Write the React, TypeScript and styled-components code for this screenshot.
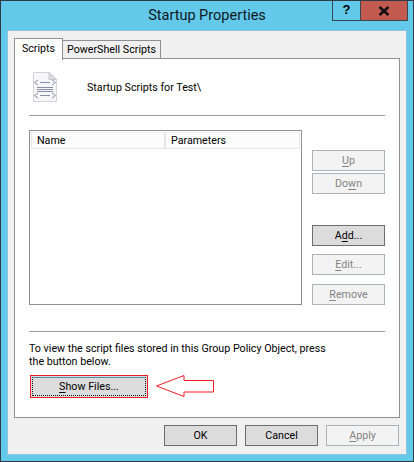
import { createGlobalStyle } from 'styled-components'
import styled from 'styled-components'

const GlobalStyle = createGlobalStyle`
  html, body {
    margin: 0;
    padding: 0;
    background: #63c9ea;
  }
  * {
    box-sizing: border-box;
  }
`

const Window = styled.div`
  width: 414px;
  height: 462px;
  background: #63c9ea;
  border: 1px solid #2f3b44;
  font-family: Roboto, Lato, sans-serif;
  font-size: 10.7px;
  color: #000;
  display: flex;
  flex-direction: column;
  overflow: hidden;
`

const TitleBar = styled.div`
  height: 30px;
  flex: none;
  display: grid;
  grid-template-columns: 1fr auto 1fr;
`

const Title = styled.div`
  grid-column: 2;
  font-size: 14.5px;
  line-height: 30px;
  color: #10181e;
`

const Controls = styled.div`
  grid-column: 3;
  justify-self: end;
  display: flex;
  height: 21px;
  margin-right: 5px;
  margin-top: -1px;
  border: 1px solid #3a4750;
`

const HelpButton = styled.div`
  width: 28px;
  font: bold 13px 'Liberation Sans', sans-serif;
  line-height: 18px;
  text-align: center;
  border-right: 1px solid #3a4750;
`

const CloseButton = styled.div`
  width: 46px;
  background: #c15b50;
  display: flex;
  align-items: center;
  justify-content: center;
`

const Client = styled.div`
  flex: 1;
  margin: 0 7px 7px 7px;
  background: #f0f0f0;
  padding: 7px 6px 0 6px;
  box-shadow: 0 0 0 1px #8fc4da;
`

const TabRow = styled.div`
  display: flex;
  align-items: flex-start;
  height: 20px;
`

const Tab = styled.div<{ $active?: boolean; $width: number }>`
  position: relative;
  z-index: ${(p) => (p.$active ? 1 : 0)};
  width: ${(p) => p.$width}px;
  border: 1px solid #8e8f97;
  border-bottom: ${(p) => (p.$active ? 'none' : '1px solid #8e8f97')};
  background: ${(p) => (p.$active ? '#fff' : '#f0f0f0')};
  height: ${(p) => (p.$active ? '22px' : '19px')};
  margin-top: ${(p) => (p.$active ? '0' : '2px')};
  padding-top: ${(p) => (p.$active ? '2px' : '1px')};
  margin-left: ${(p) => (p.$active ? '0' : '-1px')};
  line-height: 15px;
  text-align: center;
  white-space: nowrap;
`

const Panel = styled.div`
  width: 386px;
  height: 360px;
  background: #fff;
  border: 1px solid #8e8f97;
  padding: 0 14px;
  display: flex;
  flex-direction: column;
`

const Heading = styled.div`
  height: 57px;
  display: flex;
  align-items: center;
  padding-left: 3px;
  gap: 29px;
  border-bottom: 1px solid #a0a0a0;
`

const MiddleRow = styled.div`
  margin-top: 14px;
  display: flex;
  height: 175px;
  gap: 10px;
`

const List = styled.div`
  width: 273px;
  height: 175px;
  border: 1px solid #8e8f97;
  padding: 1px;
`

const ListHeader = styled.div`
  display: flex;
  height: 17px;
  line-height: 15px;
  background: #fcfcfc;
  border: 1px solid #e5e5e5;
  border-top: 1px solid #f0f0f0;
`

const Column = styled.div<{ $width?: number }>`
  width: ${(p) => (p.$width ? `${p.$width}px` : 'auto')};
  flex: ${(p) => (p.$width ? 'none' : '1')};
  padding-left: 5px;
  border-right: ${(p) => (p.$width ? '2px solid #e5e5e5' : 'none')};
`

const SideButtons = styled.div`
  display: flex;
  flex-direction: column;
  padding-top: 20px;
`

const Button = styled.div<{ $disabled?: boolean; $gap?: number }>`
  width: 73px;
  height: 21px;
  flex: none;
  margin-top: ${(p) => p.$gap ?? 0}px;
  display: flex;
  align-items: center;
  justify-content: center;
  line-height: 18px;
  border: 1px solid ${(p) => (p.$disabled ? '#adb2b5' : '#6d6d6d')};
  background: ${(p) => (p.$disabled ? '#f3f3f3' : '#dcdcdc')};
  color: ${(p) => (p.$disabled ? '#838383' : '#000')};
  u {
    text-underline-offset: 2px;
  }
`

const Divider = styled.div`
  margin-top: 26px;
  border-top: 1px solid #a0a0a0;
`

const HelpText = styled.p`
  margin: 10px 0 0 0;
  line-height: 13px;
  width: 300px;
`

const ShowFilesRow = styled.div`
  display: flex;
  align-items: flex-start;
  margin-top: 7px;
  margin-left: 1px;
  gap: 8px;
`

const ShowFilesOutline = styled.div`
  width: 118px;
  height: 23px;
  border: 1px solid #ed1c24;
  padding: 1px;
  background: #dcdcdc;
`

const ShowFilesButton = styled.div`
  height: 100%;
  border: 1px dotted #111;
  border-top: 1px solid #4a8fb8;
  display: flex;
  align-items: center;
  justify-content: center;
  line-height: 16px;
  u {
    text-underline-offset: 2px;
  }
`

const Footer = styled.div`
  display: flex;
  justify-content: flex-end;
  gap: 8px;
  margin-top: 7px;
  padding-right: 1px;
`

const ScriptIcon = () => (
  <svg width="26" height="32" viewBox="0 0 26 32">
    <path d="M1.5 1.5H17L24.5 8.5V30.5H1.5Z" fill="#f7f7f9" stroke="#d4d4d8" />
    <path d="M17 1.5V8.5H24.5Z" fill="#dcdce2" stroke="#c4c4ca" />
    <g fill="none" stroke="#8b8aa8" strokeWidth="1">
      <path d="M6 9L2.5 11.5L6 14M8 11.5H18M20 9L23.5 11.5L20 14" />
      <path d="M5 16.5H21M5 18.5H21M5 20.5H21" />
      <path d="M6 22L2.5 24.5L6 27M8 24.5H18M20 22L23.5 24.5L20 27" />
    </g>
  </svg>
)

const CloseIcon = () => (
  <svg width="12" height="10" viewBox="0 0 12 10">
    <path d="M1.5 1L10.5 9M10.5 1L1.5 9" stroke="#111" strokeWidth="2.6" />
  </svg>
)

const ArrowIcon = () => (
  <svg width="58" height="22" viewBox="0 0 58 22">
    <path
      d="M.5 11L28 .5V5.5H57.5V17H28V21.5Z"
      fill="#fff"
      stroke="#ed1c24"
      strokeWidth="1"
    />
  </svg>
)

export default function App() {
  return (
    <>
      <GlobalStyle />
      <Window>
        <TitleBar>
          <Title>Startup Properties</Title>
          <Controls>
            <HelpButton>?</HelpButton>
            <CloseButton>
              <CloseIcon />
            </CloseButton>
          </Controls>
        </TitleBar>
        <Client>
          <TabRow>
            <Tab $active $width={49}>Scripts</Tab>
            <Tab $width={99}>PowerShell Scripts</Tab>
          </TabRow>
          <Panel>
            <Heading>
              <ScriptIcon />
              <span>Startup Scripts for Test\</span>
            </Heading>
            <MiddleRow>
              <List>
                <ListHeader>
                  <Column $width={134}>Name</Column>
                  <Column>Parameters</Column>
                </ListHeader>
              </List>
              <SideButtons>
                <Button $disabled>
                  <span><u>U</u>p</span>
                </Button>
                <Button $disabled $gap={2}>
                  <span>Do<u>w</u>n</span>
                </Button>
                <Button $gap={31}>
                  <span>A<u>d</u>d...</span>
                </Button>
                <Button $disabled $gap={8}>
                  <span><u>E</u>dit...</span>
                </Button>
                <Button $disabled $gap={9}>
                  <span><u>R</u>emove</span>
                </Button>
              </SideButtons>
            </MiddleRow>
            <Divider />
            <HelpText>
              To view the script files stored in this Group Policy Object, press the button below.
            </HelpText>
            <ShowFilesRow>
              <ShowFilesOutline>
                <ShowFilesButton>
                  <span><u>S</u>how Files...</span>
                </ShowFilesButton>
              </ShowFilesOutline>
              <ArrowIcon />
            </ShowFilesRow>
          </Panel>
          <Footer>
            <Button>OK</Button>
            <Button>Cancel</Button>
            <Button $disabled>
              <span><u>A</u>pply</span>
            </Button>
          </Footer>
        </Client>
      </Window>
    </>
  )
}
